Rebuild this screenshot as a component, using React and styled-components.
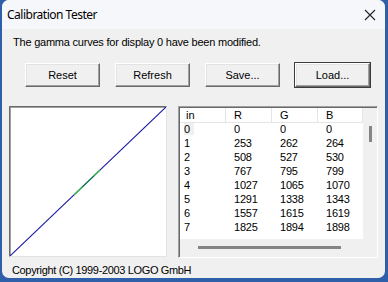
import styled, { createGlobalStyle } from "styled-components";

const GlobalStyle = createGlobalStyle`
  html, body {
    margin: 0;
    padding: 0;
    background: #2f5fa9;
  }
`;

const Window = styled.div`
  margin-left: 2px;
  width: 383px;
  height: 278px;
  background: #f0f0f0;
  border-radius: 7px;
  overflow: hidden;
  display: flex;
  flex-direction: column;
  font-family: "Liberation Sans", Arial, sans-serif;
  color: #000;
`;

const TitleBar = styled.div`
  height: 29px;
  flex-shrink: 0;
  display: flex;
  align-items: center;
  justify-content: space-between;
  padding: 0 9px 0 5px;
  background: #f6f7fa;
  font-family: "Noto Sans", sans-serif;
  font-size: 12px;
  letter-spacing: -0.5px;
`;

const CloseIcon = () => (
  <svg width="12" height="12" viewBox="0 0 12 12">
    <path d="M1 1 L11 11 M11 1 L1 11" stroke="#222" strokeWidth="1.1" />
  </svg>
);

const Body = styled.div`
  flex: 1;
  display: flex;
  flex-direction: column;
  padding: 0 0 0 7px;
`;

const Message = styled.div`
  font-size: 11px;
  letter-spacing: -0.22px;
  margin: 7px 0 0 4px;
  height: 14px;
`;

const ButtonRow = styled.div`
  display: flex;
  gap: 15px;
  margin: 13px 0 0 16px;
`;

const Button = styled.button`
  width: 75px;
  height: 24px;
  padding: 0;
  font-family: "Liberation Sans", Arial, sans-serif;
  font-size: 11px;
  color: #000;
  background: #f0f0f0;
  border: 1px solid;
  border-color: #ffffff #696969 #696969 #ffffff;
  box-shadow: inset -1px -1px 0 #a0a0a0, inset 1px 1px 0 #e3e3e3;
  outline: ${(p) => (p.primary ? "1px solid #3c3c3c" : "none")};
  outline-offset: 0;
`;

const Panels = styled.div`
  display: flex;
  gap: 11px;
  margin: 19px 0 0 0;
`;

const Graph = styled.div`
  width: 156px;
  height: 149px;
  background: #fff;
  border: 1px solid;
  border-color: #6a6a6a #e3e3e3 #e3e3e3 #6a6a6a;
  box-shadow: inset 1px 1px 0 #a0a0a0;
  overflow: hidden;
`;

const Table = styled.div`
  width: 197px;
  height: 149px;
  border: 1px solid;
  border-color: #a0a0a0 #ffffff #ffffff #a0a0a0;
  box-shadow: inset 1px 1px 0 #696969;
  background: #f0f0f0;
  display: flex;
  flex-direction: column;
  padding: 1px 0 0 1px;
  box-sizing: content-box;
  font-size: 11px;
`;

const TableTop = styled.div`
  display: flex;
  height: 131px;
  background: #fff;
`;

const Grid = styled.div`
  display: grid;
  grid-template-columns: 46px 46px 46px 45px;
  grid-auto-rows: 14px;
  align-content: start;
`;

const HeadCell = styled.div`
  height: 15px;
  line-height: 15px;
  padding-left: ${(p) => (p.first ? 6 : 8)}px;
  border-right: 1px solid #e5e5e5;
  border-bottom: 1px solid #e5e5e5;
  box-sizing: border-box;
  background: #fff;
`;

const Cell = styled.div`
  line-height: 14px;
  padding-left: ${(p) => (p.first ? 4 : 8)}px;
  letter-spacing: -0.2px;
  span {
    background: ${(p) => (p.focus ? "#f0f0f0" : "transparent")};
    padding-right: ${(p) => (p.focus ? 4 : 0)}px;
  }
`;

const VScroll = styled.div`
  flex: 1;
  background: #f0f0f0;
  display: flex;
  justify-content: center;
  padding-top: 18px;
`;

const VThumb = styled.div`
  width: 3px;
  height: 16px;
  background: #858585;
`;

const HScroll = styled.div`
  height: 17px;
  display: flex;
  align-items: center;
  padding-left: 18px;
`;

const HThumb = styled.div`
  width: 143px;
  height: 3px;
  background: #858585;
`;

const Copyright = styled.div`
  font-size: 11px;
  letter-spacing: -0.35px;
  margin: 6px 0 0 3px;
`;

const rows = [
  ["0", "0", "0", "0"],
  ["1", "253", "262", "264"],
  ["2", "508", "527", "530"],
  ["3", "767", "795", "799"],
  ["4", "1027", "1065", "1070"],
  ["5", "1291", "1338", "1343"],
  ["6", "1557", "1615", "1619"],
  ["7", "1825", "1894", "1898"],
];

const App = () => {
  return (
    <>
      <GlobalStyle />
      <Window>
        <TitleBar>
          <span>Calibration Tester</span>
          <CloseIcon />
        </TitleBar>
        <Body>
          <Message>The gamma curves for display 0 have been modified.</Message>
          <ButtonRow>
            <Button>Reset</Button>
            <Button>Refresh</Button>
            <Button>Save...</Button>
            <Button primary>Load...</Button>
          </ButtonRow>
          <Panels>
            <Graph>
              <svg width="156" height="149" viewBox="0 0 156 149">
                <line x1="0" y1="149" x2="156" y2="0" stroke="#1a1aa0" strokeWidth="1.1" />
                <line x1="64" y1="88" x2="90" y2="63" stroke="#2fbf3a" strokeWidth="1.2" />
                <line x1="72" y1="80" x2="84" y2="69" stroke="#1a1aa0" strokeWidth="0.6" />
              </svg>
            </Graph>
            <Table>
              <TableTop>
                <Grid>
                  <HeadCell first>in</HeadCell>
                  <HeadCell>R</HeadCell>
                  <HeadCell>G</HeadCell>
                  <HeadCell>B</HeadCell>
                  {rows.map((r, i) =>
                    r.map((v, j) => (
                      <Cell key={i + "-" + j} first={j === 0} focus={i === 0 && j === 0}>
                        <span>{v}</span>
                      </Cell>
                    ))
                  )}
                </Grid>
                <VScroll>
                  <VThumb />
                </VScroll>
              </TableTop>
              <HScroll>
                <HThumb />
              </HScroll>
            </Table>
          </Panels>
          <Copyright>Copyright (C) 1999-2003 LOGO GmbH</Copyright>
        </Body>
      </Window>
    </>
  );
};

export default App;
